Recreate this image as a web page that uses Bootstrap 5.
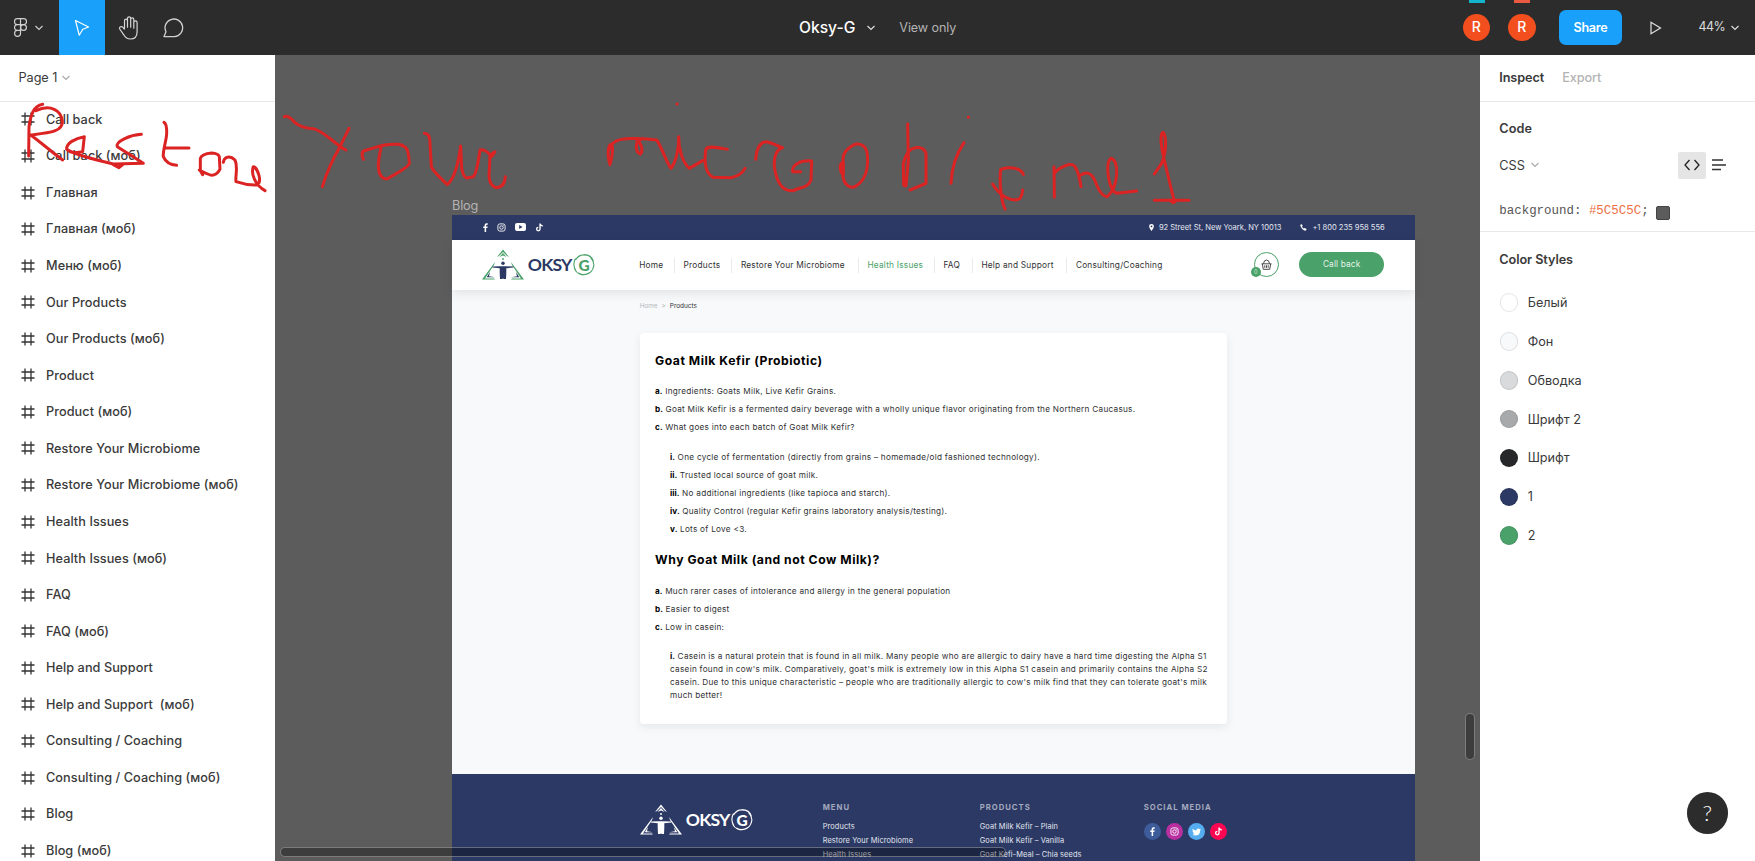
<!DOCTYPE html>
<html lang="en">
<head>
<meta charset="utf-8">
<title>Oksy-G</title>
<meta name="viewport" content="width=device-width, initial-scale=1">
<link href="https://cdn.jsdelivr.net/npm/bootstrap@5.3.0/dist/css/bootstrap.min.css" rel="stylesheet">
<style>
  body{font-family:Inter,"Liberation Sans",sans-serif;font-size:12.7px;line-height:1.2;color:#3a3a3a;letter-spacing:.06px;-webkit-font-smoothing:antialiased}
  svg{display:block;flex:none}
  .toolbar{height:55px;background:#2c2c2c;color:#fff}
  .tool{width:46px;height:55px}
  .tool-menu{width:59px;padding-left:14px}
  .tool-on{background:#18a0fb}
  .titlebox{margin-left:602px;padding-top:1px}
  .filename{font-size:15.6px;font-weight:500;letter-spacing:0}
  .viewonly{margin-left:23px;color:#b3b3b3;font-size:12.6px;letter-spacing:-.1px}
  .people{left:1462.5px}
  .person{width:27.5px;height:27.5px;background:#f24e1e;font-weight:500;font-size:14px}
  .strip{width:16px;height:3px;top:-14px;left:6px}
  .share{width:63px;height:35px;margin-left:23.5px;background:#18a0fb;color:#fff;border-radius:7px;font-weight:600;font-size:12.6px;letter-spacing:-.25px}
  .zoomlevel{margin-left:36.5px;color:#ddd;font-size:12.4px;letter-spacing:-.55px}
  .side{width:275px;background:#fff}
  .pagehead{height:46.5px;border-bottom:1.5px solid #e8e8e8}
  .layers{margin-top:-.4px}
  .layer{height:36.57px;padding-left:21px;gap:11px;font-weight:500;white-space:pre}
  .stage{background:#5c5c5c}
  .frame{width:963.5px;margin-left:176.7px;background:#f8f9fb}
  .framelabel{margin-left:177px;padding-top:143px;height:160px;color:#b3b3b3;letter-spacing:-.15px}
  .site{letter-spacing:.275px;color:#303133;font-size:8.2px}
  .navy{background:#2b3964}
  .strap{height:24.5px;padding:0 30.5px 0 30px;color:#e3e6ef;font-size:7.6px;letter-spacing:-.03px}
  .head{height:50.5px;background:#fff;box-shadow:0 3px 10px rgba(40,60,50,.12);padding-left:30px}
  .menu{grid-template-columns:44.4px 57.3px 126.5px 76px 38px 94.5px 98px;margin-left:44px;width:535px;font-size:8.3px;letter-spacing:.22px;padding-top:1px}
  .menu a{color:#303133;text-decoration:none;height:15px;line-height:15px;white-space:nowrap}
  .menu a+a{border-left:1px solid #e8eaeb;margin-left:-9.6px;padding-left:8.6px}
  .menu a.here{color:#4aa16a}
  .brand-green{--t:#4aa16a;--m:#2b3964}
  .brand-white{--t:#fff;--m:#fff}
  .oksy{font-family:Lato,sans-serif;font-weight:700;font-size:17.6px;line-height:1;color:#2b3964;width:44px;letter-spacing:-.75px;margin-left:4px}
  .ring{margin-left:1.5px}
  .gee{font-family:Lato,sans-serif;font-weight:900;font-size:15.5px;letter-spacing:0}
  .cart{width:25px;height:25px;border:1px solid #4aa16a;margin-left:79.5px}
  .cartcount{width:10px;height:10px;left:-4px;top:14px;background:#4aa16a;color:#d5ecdc;font-size:5.5px;letter-spacing:0}
  .callback{width:85px;height:25px;background:#4aa16a;color:#e6f4ea;margin-left:20.5px;font-size:8.3px;letter-spacing:.15px;border-radius:13px}
  .crumbs{height:43px;padding:13px 0 0 188px;font-size:6.4px;letter-spacing:0;gap:4px;color:#b5b7b9}
  .crumbs .now{color:#303133}
  .panel-a{width:587.5px;height:390.5px;margin-left:188px;padding:19px 14px 0 15.4px;border-radius:4px;background:#fff;box-shadow:0 3px 9px rgba(40,60,50,.09)}
  .panel-a h2{font-size:12.2px;letter-spacing:.52px;font-weight:700;line-height:18px;margin:0;color:#000}
  .panel-a h2.second{padding-top:13px}
  .panel-a b{color:#000;letter-spacing:0}
  .panel-a p{margin:0;height:18px;line-height:18px;white-space:nowrap}
  .panel-a p.wrapped{height:13px;line-height:13px}
  .points{padding-top:12px}
  .subpoints{padding:12px 0 0 15px}
  .points.low{padding-top:12.7px}
  .subpoints.para{padding-top:14.7px}
  .foot{margin-top:50px;height:87px;padding:1px 0 0 188px;color:#e3e6ef;font-size:7.4px;letter-spacing:.1px}
  .foot h3{font-size:7.7px;font-weight:700;letter-spacing:1px;color:#a4aabf;line-height:14px;margin:0 0 5px}
  .foot p{margin:0;line-height:14px;white-space:nowrap}
  .foot .oksy{color:#fff}
  .foot-brand{margin-top:29.5px;width:183px}
  .foot-col{margin-top:26px}
  .dots{gap:5.2px;padding-top:3.5px}
  .dot{width:17px;height:17px}
  .bar{border:1.3px solid rgba(255,255,255,.32);background:rgba(0,0,0,.33);border-radius:5px}
  .bar-h{left:280px;top:847px;width:726px;height:10px}
  .bar-v{left:1465px;top:713px;width:10px;height:46.5px}
  .ink{left:0;top:0;pointer-events:none}
  .tabs{padding-left:19.3px;letter-spacing:-.1px}
  .code{height:130px;padding:19.5px 0 0 19.3px;border-bottom:1.5px solid #e8e8e8}
  .codelang{margin-top:15.5px;height:27px}
  .codebtn{width:27.5px;height:27px;margin-left:138px;background:#e5e5e5;border-radius:2px}
  .mono{font-family:"Liberation Mono",monospace;font-size:12.45px;letter-spacing:0;color:#555}
  .chip{width:14px;height:14px;margin:2px 0 0 7px;background:#5c5c5c;border:1px solid #444;border-radius:2px}
  .styleshead{padding:20px 0 16.5px 19.3px;font-weight:600;letter-spacing:-.08px}
  .swatchrow{height:38.85px;gap:9.5px;padding-left:19.7px;letter-spacing:0}
  .swatch{width:18.5px;height:18.5px;border:1px solid rgba(0,0,0,.1)}
  .help{width:41.5px;height:41.5px;left:1686.5px;top:792px;background:#2c2c2c;color:#fff;font-family:Lato,sans-serif;font-size:22px;font-weight:300}
</style>
</head>
<body class="vh-100 overflow-hidden position-relative d-flex flex-column">

<svg width="0" height="0" class="position-absolute">
  <defs>
    <symbol id="hash" viewBox="0 0 14 14"><path d="M4 .5v13M10 .5v13M.5 4h13M.5 10h13" fill="none" stroke="#333" stroke-width="1.3"/></symbol>
    <symbol id="down" viewBox="0 0 10 6"><path d="M1.5 1L5 4.5 8.500 1" fill="none" stroke="currentColor" stroke-width="1.2"/></symbol>
    <symbol id="tri" viewBox="0 0 42 31">
      <g fill="var(--t)"><path d="M21 .5l6 7.500-2-1-4-4-4 4-2 1z"/><path d="M21 4l3.500 4L21 6.500 17.500 8z"/>
      <path d="M13 13L0 30.500h13l-1-1H3L12 16zM29 13l13 17.500H29l1-1h9L30 16z"/>
      <path d="M20.300 9h1.400v2h-1.400z"/></g>
      <g fill="var(--m)"><path d="M8 23l-3.300 5.300H13L7 27.200zM34 23l3.300 5.300H29l6-1.100z"/><circle cx="21" cy="14.300" r="1.700"/><path d="M10.500 17.600l8-.4h5l8 .4v1l-7.200.6v5L24 30h-2.500l-.5-1-.5 1H18l-.3-5.800v-5l-7.200-.6z"/></g>
    </symbol>
    <symbol id="swirl" viewBox="0 0 22 22"><g fill="none" stroke="currentColor" stroke-width="1.100"><path d="M2.500 6Q6.500-.5 13.500 1.300M10.500.6Q18.500.5 20.500 7.500M17.500 3.500Q23 9.500 19.500 15.500M20.800 11.500Q19.500 19.500 12.500 20.500M17 18.500Q11 22.500 5.500 19M9.500 21Q2 19.500 1.200 12.500M3 17Q-1 10.500 2.500 4.500"/></g></symbol>
    <symbol id="fb" viewBox="0 0 10 10"><path d="M4 10V5.600H2.500V4H4V2.600Q4 .3 6.200.3h1.300v1.600h-1q-.8 0-.8.9V4h1.700l-.3 1.600H5.700V10z" fill="#fff"/></symbol>
    <symbol id="ig" viewBox="0 0 10 10"><rect x="1" y="1" width="8" height="8" rx="2.200" fill="none" stroke="#fff"/><circle cx="5" cy="5" r="1.900" fill="none" stroke="#fff"/><circle cx="7.300" cy="2.700" r=".5" fill="#fff"/></symbol>
    <symbol id="tt" viewBox="0 0 10 10"><path d="M5.600.5v6.300a1.900 1.900 0 1 1-1.900-1.900M5.600.8Q6 3 8.600 3.300" fill="none" stroke="#fff" stroke-width="1.500"/></symbol>
  </defs>
</svg>

<header class="toolbar d-flex align-items-center flex-shrink-0">
  <div class="tool tool-menu d-flex align-items-center">
    <svg width="13" height="19" viewBox="0 0 13 19" fill="none" stroke="#d0d0d0" stroke-width="1.200"><path d="M6.500.7H3.400a2.900 2.900 0 0 0 0 5.900h3.100zM6.500.7h3.100a2.900 2.900 0 0 1 0 5.900H6.500zM6.500 6.600H3.400a2.900 2.900 0 0 0 0 5.800h3.100zM6.500 12.400H3.400a2.950 2.950 0 1 0 3.100 2.900z"/><circle cx="9.500" cy="9.500" r="2.900"/></svg>
    <svg style="margin-left:7px" width="10" height="6" color="#ccc"><use href="#down"/></svg>
  </div>
  <div class="tool tool-on d-flex align-items-center justify-content-center">
    <svg width="16" height="18" viewBox="0 0 16 18"><path d="M1.500 1.500l3.700 14.700 3.600-6L14.600 8z" fill="none" stroke="#fff" stroke-width="1.200" stroke-linejoin="round"/></svg>
  </div>
  <div class="tool d-flex align-items-center justify-content-center">
    <svg width="21" height="24" viewBox="0 0 21 24"><path d="M6 13V4.500a1.500 1.500 0 0 1 3 0V11 2.300a1.500 1.500 0 0 1 3.200 0V11 3.300a1.500 1.500 0 0 1 3.100 0V12 6.300a1.600 1.600 0 0 1 3.300 0V15.500c0 4.500-2.600 7.300-6.800 7.300-3.500 0-5-1.600-6.500-4.200L1.200 12.800c-.8-1.800 1.500-3.300 3-1.800L6 13.300" transform="translate(.5 .2)" fill="none" stroke="#d8d8d8" stroke-width="1.200" stroke-linejoin="round"/></svg>
  </div>
  <div class="tool d-flex align-items-center justify-content-center">
    <svg width="22" height="20" viewBox="0 0 22 20"><path d="M1 18.600l2-4.800A8.800 8.800 0 1 1 11.500 18.600z" fill="none" stroke="#d0d0d0" stroke-width="1.300" stroke-linejoin="round"/></svg>
  </div>
  <div class="titlebox d-flex align-items-center">
    <span class="filename">Oksy-G</span>
    <svg style="margin-left:11px" width="10" height="6" color="#ddd"><use href="#down"/></svg>
    <span class="viewonly">View only</span>
  </div>
  <div class="people d-flex align-items-center position-absolute">
    <div class="person rounded-circle d-flex align-items-center justify-content-center position-relative">R<i class="strip position-absolute" style="background:#12b5cb"></i></div>
    <div class="person rounded-circle d-flex align-items-center justify-content-center position-relative" style="margin-left:18px">R<i class="strip position-absolute" style="background:#ea5a43"></i></div>
    <div class="share d-flex align-items-center justify-content-center">Share</div>
    <svg style="margin-left:28px" width="12" height="14" viewBox="0 0 12 14"><path d="M1 1.200v11.600L10.500 7z" fill="none" stroke="#e0e0e0" stroke-width="1.200"/></svg>
    <span class="zoomlevel">44%</span>
    <svg style="margin-left:5px" width="10" height="6" color="#ddd"><use href="#down"/></svg>
  </div>
</header>

<main class="d-flex flex-grow-1 overflow-hidden">
  <aside class="side flex-shrink-0">
    <div class="pagehead d-flex align-items-center"><span style="margin-left:18.500px;letter-spacing:-.05px">Page 1</span><svg class="ms-1" width="10" height="6" color="#aaa"><use href="#down"/></svg></div>
    <div class="layers">
      <div class="layer d-flex align-items-center"><svg width="14" height="14"><use href="#hash"/></svg><span>Call back</span></div>
      <div class="layer d-flex align-items-center"><svg width="14" height="14"><use href="#hash"/></svg><span>Call back (моб)</span></div>
      <div class="layer d-flex align-items-center"><svg width="14" height="14"><use href="#hash"/></svg><span>Главная</span></div>
      <div class="layer d-flex align-items-center"><svg width="14" height="14"><use href="#hash"/></svg><span>Главная (моб)</span></div>
      <div class="layer d-flex align-items-center"><svg width="14" height="14"><use href="#hash"/></svg><span>Меню (моб)</span></div>
      <div class="layer d-flex align-items-center"><svg width="14" height="14"><use href="#hash"/></svg><span>Our Products</span></div>
      <div class="layer d-flex align-items-center"><svg width="14" height="14"><use href="#hash"/></svg><span>Our Products (моб)</span></div>
      <div class="layer d-flex align-items-center"><svg width="14" height="14"><use href="#hash"/></svg><span>Product</span></div>
      <div class="layer d-flex align-items-center"><svg width="14" height="14"><use href="#hash"/></svg><span>Product (моб)</span></div>
      <div class="layer d-flex align-items-center"><svg width="14" height="14"><use href="#hash"/></svg><span>Restore Your Microbiome</span></div>
      <div class="layer d-flex align-items-center"><svg width="14" height="14"><use href="#hash"/></svg><span>Restore Your Microbiome (моб)</span></div>
      <div class="layer d-flex align-items-center"><svg width="14" height="14"><use href="#hash"/></svg><span>Health Issues</span></div>
      <div class="layer d-flex align-items-center"><svg width="14" height="14"><use href="#hash"/></svg><span>Health Issues (моб)</span></div>
      <div class="layer d-flex align-items-center"><svg width="14" height="14"><use href="#hash"/></svg><span>FAQ</span></div>
      <div class="layer d-flex align-items-center"><svg width="14" height="14"><use href="#hash"/></svg><span>FAQ (моб)</span></div>
      <div class="layer d-flex align-items-center"><svg width="14" height="14"><use href="#hash"/></svg><span>Help and Support</span></div>
      <div class="layer d-flex align-items-center"><svg width="14" height="14"><use href="#hash"/></svg><span>Help and Support  (моб)</span></div>
      <div class="layer d-flex align-items-center"><svg width="14" height="14"><use href="#hash"/></svg><span>Consulting / Coaching</span></div>
      <div class="layer d-flex align-items-center"><svg width="14" height="14"><use href="#hash"/></svg><span>Consulting / Coaching (моб)</span></div>
      <div class="layer d-flex align-items-center"><svg width="14" height="14"><use href="#hash"/></svg><span>Blog</span></div>
      <div class="layer d-flex align-items-center"><svg width="14" height="14"><use href="#hash"/></svg><span>Blog (моб)</span></div>
    </div>
  </aside>

  <section class="stage flex-grow-1 overflow-hidden">
    <div class="framelabel">Blog</div>
    <div class="frame site">
      <div class="strap navy d-flex align-items-center">
        <svg width="7" height="9" viewBox="2 0 6 10"><use href="#fb" width="10" height="10"/></svg>
        <svg style="margin-left:8px" width="9" height="9"><use href="#ig"/></svg>
        <svg style="margin-left:9px" width="11" height="8" viewBox="0 0 11 8"><rect width="11" height="8" rx="2" fill="#fff"/><path d="M4.200 2v4L7.600 4z" fill="#2b3964"/></svg>
        <svg style="margin-left:9px" width="9" height="9"><use href="#tt"/></svg>
        <svg class="ms-auto" width="5" height="7" viewBox="0 0 5 7"><path d="M2.500 0A2.400 2.400 0 0 1 4.900 2.500Q4.700 4 2.500 7 .3 4 .1 2.500A2.400 2.400 0 0 1 2.500 0z" fill="#fff"/><circle cx="2.500" cy="2.400" r=".9" fill="#2b3964"/></svg>
        <span style="margin-left:4.500px">92 Street St, New Yoark, NY 10013</span>
        <svg style="margin-left:19px" width="7" height="7" viewBox="0 0 7 7"><path d="M.3 1Q1 0 1.700.3l1 1.500-.7.9q.6 1.200 1.700 1.900l1-.6L6.500 5q.4.700-.8 1.600Q4.500 7.100 2.200 4.900 0 2.500.3 1z" fill="#fff"/></svg>
        <span style="margin-left:5px">+1 800 235 958 556</span>
      </div>
      <div class="head d-flex align-items-center">
        <svg class="brand-green" width="42" height="31"><use href="#tri"/></svg>
        <span class="oksy">OKSY</span>
        <svg class="ring" color="#4aa16a" width="22" height="22"><use href="#swirl"/><text x="11" y="16.500" text-anchor="middle" class="gee" fill="currentColor">G</text></svg>
        <nav class="menu d-grid">
          <a>Home</a><a>Products</a><a>Restore Your Microbiome</a><a class="here">Health Issues</a><a>FAQ</a><a>Help and Support</a><a>Consulting/Coaching</a>
        </nav>
        <div class="cart rounded-circle position-relative d-flex align-items-center justify-content-center">
          <svg width="11" height="11" viewBox="0 0 11 11" fill="none" stroke="#333"><path d="M2.500 4.500Q3 1 5.500 1t3 3.500M.5 4.800h10M1.300 5l1 5.300h6.400l1-5.300M3.800 6.300v2.500M5.500 6.300v2.500M7.200 6.300v2.500" stroke-width=".9"/></svg>
          <span class="cartcount rounded-circle position-absolute d-flex align-items-center justify-content-center">0</span>
        </div>
        <div class="callback d-flex align-items-center justify-content-center">Call back</div>
      </div>
      <div class="crumbs d-flex align-items-start"><span>Home</span><span>&gt;</span><span class="now">Products</span></div>
      <article class="panel-a">
        <h2>Goat Milk Kefir (Probiotic)</h2>
        <div class="points">
          <p><b>a.</b> Ingredients: Goats Milk, Live Kefir Grains.</p>
          <p><b>b.</b> Goat Milk Kefir is a fermented dairy beverage with a wholly unique flavor originating from the Northern Caucasus.</p>
          <p><b>c.</b> What goes into each batch of Goat Milk Kefir?</p>
        </div>
        <div class="subpoints">
          <p><b>i.</b> One cycle of fermentation (directly from grains – homemade/old fashioned technology).</p>
          <p><b>ii.</b> Trusted local source of goat milk.</p>
          <p><b>iii.</b> No additional ingredients (like tapioca and starch).</p>
          <p><b>iv.</b> Quality Control (regular Kefir grains laboratory analysis/testing).</p>
          <p><b>v.</b> Lots of Love &lt;3.</p>
        </div>
        <h2 class="second">Why Goat Milk (and not Cow Milk)?</h2>
        <div class="points low">
          <p><b>a.</b> Much rarer cases of intolerance and allergy in the general population</p>
          <p><b>b.</b> Easier to digest</p>
          <p><b>c.</b> Low in casein:</p>
        </div>
        <div class="subpoints para">
          <p class="wrapped"><b>i.</b> Casein is a natural protein that is found in all milk. Many people who are allergic to dairy have a hard time digesting the Alpha S1</p>
          <p class="wrapped">casein found in cow's milk. Comparatively, goat's milk is extremely low in this Alpha S1 casein and primarily contains the Alpha S2</p>
          <p class="wrapped">casein. Due to this unique characteristic – people who are traditionally allergic to cow's milk find that they can tolerate goat's milk</p>
          <p class="wrapped">much better!</p>
        </div>
      </article>
      <footer class="foot navy d-flex align-items-start">
        <div class="foot-brand d-flex align-items-center">
          <svg class="brand-white" width="42" height="31"><use href="#tri"/></svg>
          <span class="oksy">OKSY</span>
          <svg class="ring" color="#fff" width="22" height="22"><use href="#swirl"/><text x="11" y="16.500" text-anchor="middle" class="gee" fill="currentColor">G</text></svg>
        </div>
        <div class="foot-col" style="width:157px"><h3>MENU</h3><p>Products</p><p>Restore Your Microbiome</p><p>Health Issues</p></div>
        <div class="foot-col" style="width:164px"><h3>PRODUCTS</h3><p>Goat Milk Kefir – Plain</p><p>Goat Milk Kefir – Vanilla</p><p>Goat Kefi-Meal – Chia seeds</p></div>
        <div class="foot-col"><h3>SOCIAL MEDIA</h3>
          <div class="dots d-flex">
            <span class="dot rounded-circle d-flex align-items-center justify-content-center" style="background:#3f5c9a"><svg width="9" height="9"><use href="#fb"/></svg></span>
            <span class="dot rounded-circle d-flex align-items-center justify-content-center" style="background:#b92fa0"><svg width="9" height="9"><use href="#ig"/></svg></span>
            <span class="dot rounded-circle d-flex align-items-center justify-content-center" style="background:#55acee"><svg width="9" height="8" viewBox="0 0 9 8"><path d="M.5.800Q2.200 2.600 4.400 2.600 4.200.5 6.200.4q.9 0 1.400.6L8.800.700 8 1.900l1-.2-.9 1Q8 7.500 3.200 7.600 1.500 7.600.2 6.800q1.500 0 2.500-.8-1.200-.1-1.700-1.300h.8Q.5 4.200.5 2.700l.8.200Q0 1.900.5.800z" fill="#fff"/></svg></span>
            <span class="dot rounded-circle d-flex align-items-center justify-content-center" style="background:#fe0652"><svg width="9" height="9"><use href="#tt"/></svg></span>
          </div>
        </div>
      </footer>
    </div>
  </section>

  <aside class="side flex-shrink-0">
    <div class="pagehead tabs d-flex align-items-center"><span class="fw-semibold">Inspect</span><span style="margin-left:18px;color:#b3b3b3;font-weight:500">Export</span></div>
    <div class="code">
      <div class="fw-semibold">Code</div>
      <div class="codelang d-flex align-items-center">
        <span>CSS</span><svg style="margin-left:5px" width="10" height="6" color="#aaa"><use href="#down"/></svg>
        <span class="codebtn d-flex align-items-center justify-content-center"><svg width="16" height="12" viewBox="0 0 16 12"><path d="M5.500 1L1 6l4.500 5M10.500 1L15 6l-4.500 5" fill="none" stroke="#222" stroke-width="1.300"/></svg></span>
        <svg style="margin-left:6px" width="14" height="12" viewBox="0 0 14 12"><path d="M0 1h11M0 6h14M0 10.500h9" stroke="#333" stroke-width="1.400"/></svg>
      </div>
      <div class="d-flex align-items-center" style="margin-top:25.500px;height:15px"><span class="mono">background: <span style="color:#ee6f45">#5C5C5C</span>;</span><i class="chip"></i></div>
    </div>
    <div class="styleshead">Color Styles</div>
    <div class="swatchrow d-flex align-items-center"><i class="swatch rounded-circle" style="background:#fff"></i>Белый</div>
    <div class="swatchrow d-flex align-items-center"><i class="swatch rounded-circle" style="background:#f8f9fb"></i>Фон</div>
    <div class="swatchrow d-flex align-items-center"><i class="swatch rounded-circle" style="background:#d9dadb"></i>Обводка</div>
    <div class="swatchrow d-flex align-items-center"><i class="swatch rounded-circle" style="background:#a7a9ab"></i>Шрифт 2</div>
    <div class="swatchrow d-flex align-items-center"><i class="swatch rounded-circle" style="background:#262829"></i>Шрифт</div>
    <div class="swatchrow d-flex align-items-center"><i class="swatch rounded-circle" style="background:#2b3964"></i>1</div>
    <div class="swatchrow d-flex align-items-center"><i class="swatch rounded-circle" style="background:#4aa16a"></i>2</div>
  </aside>
</main>

<div class="bar bar-h position-absolute"></div>
<div class="bar bar-v position-absolute"></div>
<div class="help rounded-circle position-absolute d-flex align-items-center justify-content-center">?</div>

<svg class="ink position-absolute" width="1755" height="861" viewBox="0 0 5265 2583" fill="none" stroke="#dc2323" stroke-width="9" stroke-linecap="round" stroke-linejoin="round">
  <path d="M128 313C100 318 92 345 87 380L86 468M108 332C150 312 185 330 187 365C188 395 150 398 92 405C120 425 160 460 188 480"/>
  <path d="M253 410C225 415 198 430 200 448C215 465 235 455 248 455L253 410M200 448Q225 466 340 492L430 490L352 440C345 425 390 405 424 403M340 494l17 9 12-10"/>
  <path d="M492 367Q501 372 500 400C500 420 488 450 490 470Q500 494 530 496M494 444H567"/>
  <path d="M608 524L601 512V475Q605 462 635 459Q655 460 658 470L660 508Q650 526 635 526Q620 522 598 510M670 487C672 470 690 465 705 480C715 500 705 530 708 545Q740 556 770 555C790 545 770 500 760 500C752 520 765 555 795 572"/>
  <path d="M853 350Q865 345 885 368Q905 385 940 386C975 395 1000 430 1038 450M1047 385L1020 440Q985 500 967 560"/>
  <g transform="translate(810 270)">
    <path d="M280 208C275 195 272 182 290 180C330 168 350 160 385 163C412 168 416 180 418 220Q415 232 350 267Q325 265 325 225Q328 190 333 175"/>
    <path d="M463 130Q480 130 480 160L484 230Q490 245 532 284Q560 260 572 168L575 235Q580 262 590 264L610 260Q620 250 630 180Q645 175 665 200L675 185L660 195L657 260Q660 290 680 293Q705 290 706 260"/>
    <path d="M1020 224C1010 190 1015 162 1025 163C1033 180 1022 215 1020 224M1017 180C1025 145 1060 140 1160 150C1175 170 1190 220 1203 235C1215 220 1228 180 1226 140C1225 180 1240 220 1258 235L1298 212M1112 150C1090 160 1100 190 1112 192C1120 180 1115 160 1100 152"/>
    <path d="M1372 178C1340 172 1310 165 1307 180C1302 220 1305 250 1330 262L1385 263Q1415 255 1425 235M1221 42h.5"/>
  </g>
  <g transform="translate(2280 0)">
    <path d="M-13 478C-10 445 0 425 20 425C45 430 55 440 68 443C45 450 42 480 43 500C50 550 70 575 100 572C115 562 145 565 153 540L155 483C120 480 95 495 98 515H122"/>
    <path d="M245 490C238 490 240 520 248 520C250 560 275 565 285 560C320 540 325 500 322 465C320 435 300 430 285 433C260 445 245 460 250 490V525"/>
    <path d="M443 372L445 480L438 558L431 556L430 490Q435 470 445 455C460 440 490 435 498 460V550L450 570M612 428C590 460 575 500 573 550M625 352h.5"/>
    <path d="M790 523C780 500 740 500 722 508C718 540 722 600 735 627M698 552C720 590 760 610 780 595Q787 585 788 570"/>
    <path d="M882 500L883 592M882 520C900 500 935 485 945 500C955 515 960 540 963 560M963 525C985 510 1000 525 1010 555Q1025 590 1042 590C1075 560 1080 480 1052 475C1035 490 1045 570 1070 580L1130 573"/>
    <path d="M1183 522L1205 490C1225 440 1215 398 1208 397C1195 410 1210 470 1220 510L1243 605M1183 601H1287M1233 603l7 5 7-5"/>
  </g>
</svg>
<script src="https://cdn.jsdelivr.net/npm/bootstrap@5.3.0/dist/js/bootstrap.bundle.min.js"></script>
</body>
</html>
